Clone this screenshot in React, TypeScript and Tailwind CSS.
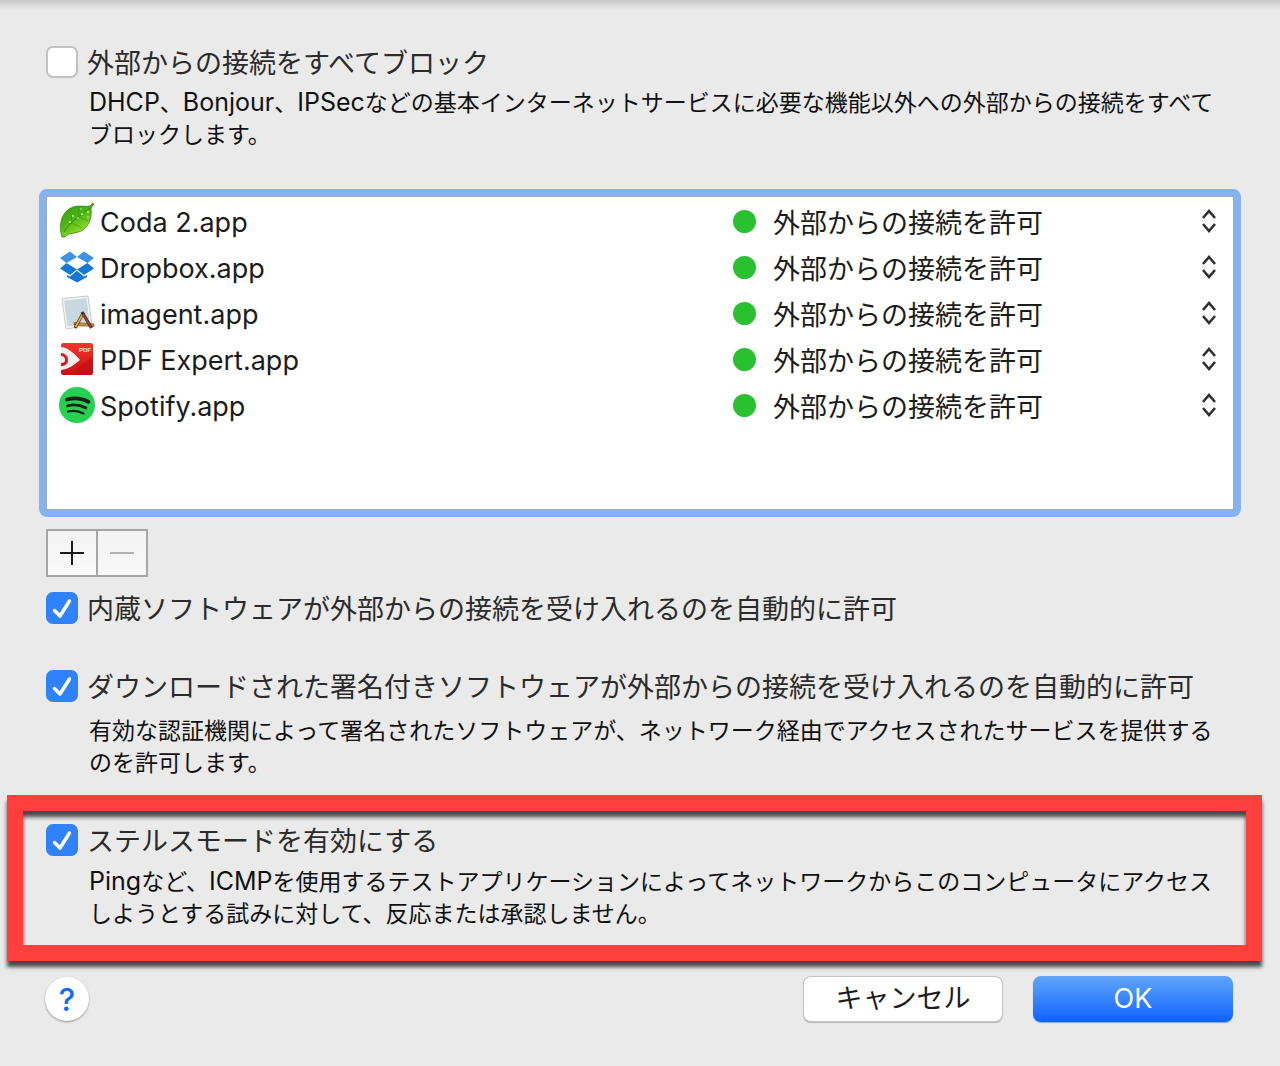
import { useState } from "react";
import type { ReactNode } from "react";

function CodaIcon() {
  return (
    <svg viewBox="0 0 36 36" className="h-9 w-9">
      <defs>
        <linearGradient id="leaf" x1="0" y1="0" x2="0.6" y2="1">
          <stop offset="0" stopColor="#2f9a0d" />
          <stop offset="0.5" stopColor="#4cb414" />
          <stop offset="1" stopColor="#a5e62c" />
        </linearGradient>
      </defs>
      <path d="M3 34C-1 21 3 8 14 4c6-2 12 0 17-1l3-3 1 1-3 4c1 8-1 17-8 22-6 4-14 2-18 7z" fill="url(#leaf)" stroke="#2c8a12" strokeWidth="0.8" />
      <path d="M5 29C10 20 18 15 31 5" fill="none" stroke="#2f830f" strokeWidth="0.9" />
      <path d="M12 21l1-10M19 15l1-9M13 20l10 5M20 14l9 4" fill="none" stroke="#3b910f" strokeWidth="0.6" />
      <g fill="#dcf7c5">
        <circle cx="11" cy="19" r="0.9" />
        <circle cx="14" cy="13" r="0.9" />
        <circle cx="19" cy="15" r="0.8" />
        <circle cx="23" cy="11" r="0.9" />
        <circle cx="22" cy="6" r="0.7" />
        <circle cx="29" cy="9" r="0.9" />
        <circle cx="29" cy="14" r="0.7" />
      </g>
    </svg>
  );
}

function DropboxIcon() {
  return (
    <svg viewBox="0 0 36 36" className="h-9 w-9">
      <path d="M11 2.500 18 8 7.500 14 1 9z" fill="#3d92e2" />
      <path d="M25 2.500 35 9 28.500 14 18 8z" fill="#3d92e2" />
      <path d="M1 19.500 7.500 14 18 20.500 11 26z" fill="#1479d6" />
      <path d="M28.500 14 35 19.500 25 26 18 20.500z" fill="#1479d6" />
      <path d="M8 26l3 1.500 7-5.700 7 5.700 3-1.500v2l-10 5.500-10-5.500z" fill="#1676d2" />
    </svg>
  );
}

function ImagentIcon() {
  return (
    <svg viewBox="0 0 36 36" className="h-9 w-9">
      <path d="M3 3.500 29 1l4 29-26 4z" fill="#f4f4f4" stroke="#bcbcbc" strokeWidth="0.800" />
      <path d="M5 5.500 27.500 3.200l3.300 25-22.300 3.200z" fill="#c8d8e0" />
      <path d="M15 27.500 35 29v2.500L15 30z" fill="#c8923c" stroke="#6d4017" strokeWidth="0.600" />
      <path d="M24.500 17.500 16 33" stroke="#5b351c" strokeWidth="3.200" />
      <path d="M24 18.500 16.500 32" stroke="#e6b33d" strokeWidth="1.600" />
      <path d="M23 17l9.500 16" stroke="#4e2d20" strokeWidth="3.200" />
      <path d="M24 19l8 13" stroke="#a7563c" strokeWidth="1.200" />
    </svg>
  );
}

function PdfExpertIcon() {
  return (
    <svg viewBox="0 0 36 36" className="h-9 w-9">
      <defs>
        <linearGradient id="pdf" x1="0" y1="0" x2="0" y2="1">
          <stop offset="0" stopColor="#f0362c" />
          <stop offset="1" stopColor="#cf0d12" />
        </linearGradient>
        <clipPath id="pdfClip">
          <rect x="2" y="2" width="32" height="32" rx="2.500" />
        </clipPath>
      </defs>
      <g clipPath="url(#pdfClip)">
        <rect x="2" y="2" width="32" height="32" fill="url(#pdf)" />
        <path d="M10 34 34 15v19z" fill="#bb0b12" opacity="0.500" />
        <path d="M2 6c8 1 14 7 19 13-6 5-11 9-19 10z" fill="#f3eeee" />
        <path d="M2 12c4 0 7 3 7 7s-3 6-7 6v-3c3 0 4-1 4-3s-1-4-4-4z" fill="#d41b1e" />
        <text x="20" y="11" fontSize="6" fontWeight="700" fill="#ffe1de" className="font-['Liberation_Sans']">
          PDF
        </text>
      </g>
    </svg>
  );
}

function SpotifyIcon() {
  return (
    <svg viewBox="0 0 36 36" className="h-9 w-9" fill="none" stroke="#14231a" strokeLinecap="round">
      <circle cx="18" cy="18" r="18" fill="#26d152" stroke="none" />
      <path d="M8 12.500c7-2 15-1.300 21.500 2.300" strokeWidth="3.800" />
      <path d="M8.500 18.800c6-1.600 12.500-1 18.300 2.100" strokeWidth="2.900" />
      <path d="M9 24.500c5.500-1.300 10.800-.700 15.500 2" strokeWidth="2.300" />
    </svg>
  );
}

const apps = [
  { name: "Coda 2.app", icon: CodaIcon },
  { name: "Dropbox.app", icon: DropboxIcon },
  { name: "imagent.app", icon: ImagentIcon },
  { name: "PDF Expert.app", icon: PdfExpertIcon },
  { name: "Spotify.app", icon: SpotifyIcon },
];

// Latin words run slightly larger than the kana around them
function Latin({ children }: { children: ReactNode }) {
  return <span className="text-[25px] leading-none">{children}</span>;
}

function Option({
  id,
  label,
  checked = false,
  children,
}: {
  id: string;
  label: string;
  checked?: boolean;
  children?: ReactNode;
}) {
  const [on, setOn] = useState(checked);

  return (
    <div>
      <div className="flex h-8 items-center gap-[9px]">
        <span className="grid h-8 w-8 shrink-0 place-items-center">
          <input
            id={id}
            type="checkbox"
            checked={on}
            onChange={(e) => setOn(e.target.checked)}
            className="h-8 w-8 appearance-none rounded-[7px] border-2 border-[#c2c2c2] bg-white [grid-area:1/1] checked:border-0 checked:bg-[#2f82fb]"
          />
          {on && (
            <svg viewBox="0 0 32 32" className="pointer-events-none h-8 w-8 [grid-area:1/1]">
              <path d="M8.500 18.500l5.500 5.500L23.500 9" fill="none" stroke="#fff" strokeWidth="3.500" strokeLinecap="round" strokeLinejoin="round" />
            </svg>
          )}
        </span>
        <label htmlFor={id} className="pt-[3px] text-[27px] leading-8 text-[#2b2b2b]">
          {label}
        </label>
      </div>
      {children && (
        <p className="pl-[43px] text-[23px] leading-8 text-[#111]">{children}</p>
      )}
    </div>
  );
}

export default function App() {
  return (
    <div className="min-h-screen bg-[#eaeaea] pb-10 font-['Inter','Noto_Sans_CJK_JP',sans-serif] text-[#1c1c1c]">
      <div className="h-2.5 bg-linear-to-b from-[#c9c9c9] to-[#eaeaea]" />

      <main className="px-[46px] pt-9">
        <div className="[&_p]:mt-[9px]">
          <Option id="block-all" label="外部からの接続をすべてブロック">
            <Latin>DHCP</Latin>、<Latin>Bonjour</Latin>、<Latin>IPSec</Latin>
            などの基本インターネットサービスに必要な機能以外への外部からの接続をすべて
            <br />
            ブロックします。
          </Option>
        </div>

        <div className="-mx-[7px] mt-[38px] rounded-lg bg-[#84b3f0] p-[7px]">
          <div className="h-[314px] border border-[#a0aab8] bg-white pt-px">
            <table className="w-full table-fixed">
              <tbody>
                {apps.map((app) => (
                  <tr key={app.name} className="h-[46px]">
                    <td className="p-0 pl-3">
                      <div className="flex items-center gap-[5px]">
                        <app.icon />
                        <span className="pt-[3px] text-[27px] leading-9">{app.name}</span>
                      </div>
                    </td>
                    <td className="w-[500px] p-0">
                      <div className="flex items-center">
                        <span className="mr-[17px] h-[23px] w-[23px] shrink-0 rounded-full bg-[#2ac131]" />
                        <select
                          aria-label={app.name}
                          className="h-[46px] min-w-0 flex-1 appearance-none bg-transparent pt-1.5 text-[27px]"
                        >
                          <option>外部からの接続を許可</option>
                          <option>外部からの接続をブロック</option>
                        </select>
                        <svg viewBox="0 0 16 24" className="pointer-events-none mr-4 h-6 w-4 shrink-0" fill="none" stroke="#303030" strokeWidth="2.600">
                          <path d="M2 9l6-7 6 7M2 15l6 7 6-7" />
                        </svg>
                      </div>
                    </td>
                  </tr>
                ))}
              </tbody>
            </table>
          </div>
        </div>

        <div className="mt-3 flex">
          <button aria-label="追加" className="grid h-12 w-[52px] place-items-center border-2 border-[#a6a6a6] bg-linear-to-b from-[#f3f3f3] to-[#fafafa]">
            <svg viewBox="0 0 26 26" className="h-[26px] w-[26px]" stroke="#1b1b1b" strokeWidth="2">
              <path d="M1 13h24M13 1v24" />
            </svg>
          </button>
          <button aria-label="削除" disabled className="-ml-0.5 grid h-12 w-[52px] place-items-center border-2 border-[#a6a6a6] bg-linear-to-b from-[#f3f3f3] to-[#f8f8f8]">
            <svg viewBox="0 0 26 26" className="h-[26px] w-[26px]" stroke="#b2b2b2" strokeWidth="2">
              <path d="M1 13h24" />
            </svg>
          </button>
        </div>

        <div className="mt-[15px]">
          <Option id="built-in" label="内蔵ソフトウェアが外部からの接続を受け入れるのを自動的に許可" checked />
        </div>

        <div className="mt-[46px] [&_p]:mt-[13px]">
          <Option id="signed" label="ダウンロードされた署名付きソフトウェアが外部からの接続を受け入れるのを自動的に許可" checked>
            有効な認証機関によって署名されたソフトウェアが、ネットワーク経由でアクセスされたサービスを提供する
            <br />
            のを許可します。
          </Option>
        </div>

        <section className="-mr-7 -ml-[39px] mt-4 border-16 border-[#ff403c] pt-[13px] pr-3 pb-[15px] pl-[23px] shadow-[0_6px_4px_#484848,inset_0_6px_4px_#484848] [&_p]:mt-[10px]">
          <Option id="stealth" label="ステルスモードを有効にする" checked>
            <Latin>Ping</Latin>など、<Latin>ICMP</Latin>
            を使用するテストアプリケーションによってネットワークからこのコンピュータにアクセス
            <br />
            しようとする試みに対して、反応または承認しません。
          </Option>
        </section>

        <footer className="mt-[15px] flex items-center gap-[30px] pr-px">
          <button aria-label="ヘルプ" className="mr-auto -ml-px grid h-11 w-11 place-items-center rounded-full bg-white text-[31px] leading-none font-medium text-[#1268ff] shadow-[0_1px_2px_#8f8f8f]">
            ?
          </button>
          <button className="h-[46px] w-[200px] rounded-lg border border-[#c4c4c4] bg-white text-[27px] leading-8 shadow-[0_1px_1px_#b4b4b4]">
            キャンセル
          </button>
          <button className="h-[46px] w-[200px] rounded-lg bg-linear-to-b from-[#5fa5fa] to-[#0a60ff] text-[27px] leading-8 text-white shadow-[0_1px_1px_#8aa4d4]">
            OK
          </button>
        </footer>
      </main>
    </div>
  );
}
